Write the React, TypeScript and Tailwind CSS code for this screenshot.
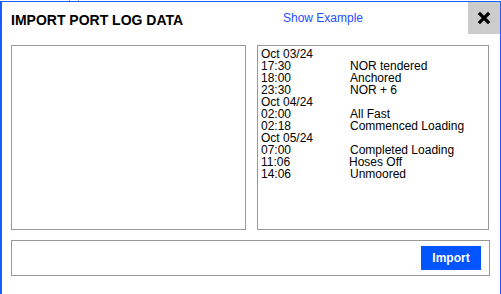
const entries: { time?: string; date?: string; event?: string; shift?: boolean }[] = [
  { date: 'Oct 03/24' },
  { time: '17:30', event: 'NOR tendered' },
  { time: '18:00', event: 'Anchored' },
  { time: '23:30', event: 'NOR + 6' },
  { date: 'Oct 04/24' },
  { time: '02:00', event: 'All Fast' },
  { time: '02:18', event: 'Commenced Loading' },
  { date: 'Oct 05/24' },
  { time: '07:00', event: 'Completed Loading' },
  { time: '11:06', event: 'Hoses Off', shift: true },
  { time: '14:06', event: 'Unmoored' },
];

export default function App() {
  return (
    <div className="w-[501px] h-[294px] overflow-hidden bg-white font-['Liberation_Sans',Arial,sans-serif]">
      {/* tick marks above the dialog */}
      <div className="flex h-px">
        <div className="ml-[69px] w-px h-px bg-gray-400" />
        <div className="ml-[8px] w-px h-px bg-gray-400" />
      </div>
      <div className="relative h-[320px] border border-l-2 border-[#1a5cff] bg-white pl-[9px] pr-[10px]">
        {/* header */}
        <div className="flex h-[43px] items-start">
          <div className="w-[272px] pt-[10px] text-[14px] leading-[16px] font-bold text-black">IMPORT PORT LOG DATA</div>
          <a className="pt-[9px] text-[12px] leading-[14px] text-[#1f4fff] cursor-pointer">Show Example</a>
        </div>
        <button className="absolute right-0 top-0 flex h-[32px] w-[32px] items-center justify-center bg-[#cccccc]">
          <svg width="14" height="14" viewBox="0 0 14 14">
            <path d="M3 3 L11 11 M11 3 L3 11" stroke="#000" strokeWidth="3.2" strokeLinecap="square" />
          </svg>
        </button>

        {/* text areas */}
        <div className="grid grid-cols-[235px_232px] gap-x-[11px]">
          <div className="h-[185px] border border-[#999999]" />
          <div className="h-[185px] border border-[#999999] pl-[3px] pt-[2px] text-[12px] leading-[12px] text-black">
            {entries.map((e, i) =>
              e.date ? (
                <div key={i}>{e.date}</div>
              ) : (
                <div key={i} className="flex">
                  <span className="w-[89px]">{e.time}</span>
                  <span className={e.shift ? '-ml-px' : ''}>{e.event}</span>
                </div>
              )
            )}
          </div>
        </div>

        {/* footer */}
        <div className="mt-[10px] flex h-[36px] items-center justify-end border border-[#999999] pr-[8px]">
          <button className="h-[24px] w-[60px] bg-[#0055ff] text-[12px] font-bold text-white">Import</button>
        </div>
      </div>
    </div>
  );
}
